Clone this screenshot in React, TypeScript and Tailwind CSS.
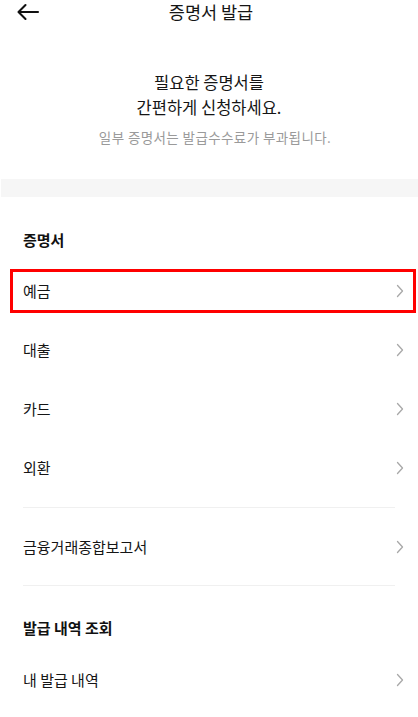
import React from "react";

const Chevron = () => (
  <svg width="8" height="14" viewBox="0 0 8 14" fill="none" className="shrink-0">
    <path d="M1.5 1.5L6.5 7L1.5 12.5" stroke="#a8a8a8" strokeWidth="1.3" strokeLinecap="round" strokeLinejoin="round" />
  </svg>
);

const Row = ({ label, h = "h-[59px]", highlight = false }: { label: string; h?: string; highlight?: boolean }) => (
  <div className={`relative flex items-center justify-between pl-[23px] pr-[14px] ${h}`}>
    <span className="text-[15px] leading-[22px] text-[#151515]">{label}</span>
    <Chevron />
    {highlight && (
      <div className="absolute left-[10px] right-[2px] top-[8px] h-[44px] border-[3px] border-[#ff0000]" />
    )}
  </div>
);

export default function App() {
  return (
    <div
      className="w-[418px] h-[717px] overflow-hidden bg-white text-[#151515]"
      style={{ fontFamily: '"Noto Sans CJK KR", "Noto Sans", sans-serif' }}
    >
      <div className="relative h-[27px] flex items-center justify-center">
        <svg width="24" height="18" viewBox="0 0 24 18" fill="none" className="absolute left-[16px] top-[3px]">
          <path d="M22 9H3M9.5 2L2.5 9L9.5 16" stroke="#111" strokeWidth="2.1" strokeLinecap="round" strokeLinejoin="round" />
        </svg>
        <span className="text-[17.5px] leading-[22px] text-[#151515] -mt-[3px] pl-[4px]">증명서 발급</span>
      </div>

      <div className="pt-[43px] text-center">
        <p className="text-[16.5px] leading-[25px] text-[#151515]">
          필요한 증명서를
          <br />
          간편하게 신청하세요.
        </p>
        <p className="mt-[8px] pl-[12px] text-[13.5px] tracking-[0.4px] leading-[18px] text-[#9a9a9a]">
          일부 증명서는 발급수수료가 부과됩니다.
        </p>
      </div>

      <div className="mt-[33px] ml-[1px] h-[18px] bg-[#f6f6f6]" />

      <div className="pt-[32px] pb-[10px] pl-[23px]">
        <h2 className="text-[15px] leading-[22px] font-bold text-[#111]">증명서</h2>
      </div>

      <Row label="예금" highlight />
      <Row label="대출" />
      <Row label="카드" />
      <Row label="외환" />

      <div className="mt-[10px] mx-[23px] h-px bg-[#f0f0f0]" />
      <Row label="금융거래종합보고서" h="h-[77px]" />
      <div className="mx-[23px] h-px bg-[#f0f0f0]" />

      <div className="pt-[31px] pb-[11px] pl-[23px]">
        <h2 className="text-[15px] leading-[22px] font-bold text-[#111]">발급 내역 조회</h2>
      </div>
      <Row label="내 발급 내역" />
    </div>
  );
}
